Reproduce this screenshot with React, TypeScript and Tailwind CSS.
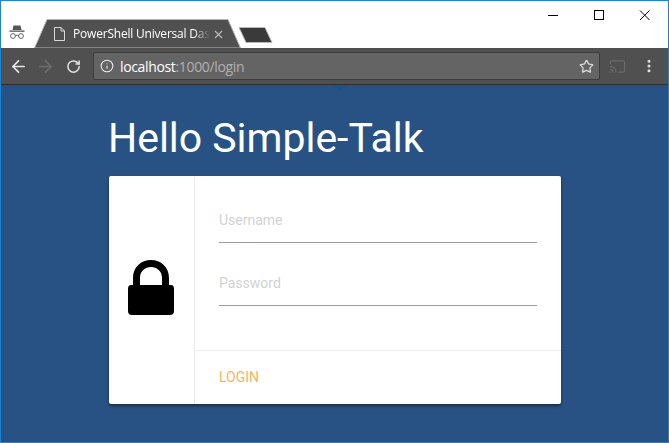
import React from "react";
import { ArrowLeft, ArrowRight, RotateCw, Star, Info, X, Cast, EllipsisVertical } from "lucide-react";

function IncognitoIcon() {
  return (
    <svg width="18" height="18" viewBox="0 0 18 18" className="text-[#555]">
      <path d="M5.5 2.5 L12.5 2.5 L13.5 7 L4.5 7 Z" fill="currentColor" />
      <rect x="1.5" y="7.5" width="15" height="1.3" fill="currentColor" />
      <circle cx="5" cy="13" r="2.4" fill="none" stroke="currentColor" strokeWidth="0.9" />
      <circle cx="13" cy="13" r="2.4" fill="none" stroke="currentColor" strokeWidth="0.9" />
      <path d="M7.4 12.6 Q9 11.8 10.6 12.6" fill="none" stroke="currentColor" strokeWidth="0.9" />
    </svg>
  );
}

function FileIcon() {
  return (
    <svg width="11" height="14" viewBox="0 0 11 14" fill="none" stroke="#d8d8d8" strokeWidth="1">
      <path d="M0.5 0.5 H7 L10.5 4 V13.5 H0.5 Z M7 0.5 V4 H10.5" />
    </svg>
  );
}

function LockIcon() {
  return (
    <svg width="46" height="56" viewBox="0 0 46 56">
      <path
        d="M5 25 V18 C5 7 13 0 23 0 C33 0 41 7 41 18 V25 H43 Q46 25 46 29 V51 Q46 55 42 55 H4 Q0 55 0 51 V29 Q0 25 3 25 Z M12 25 H34 V18 C34 11 29 7 23 7 C17 7 12 11 12 18 Z"
        fill="#000"
        fillRule="evenodd"
      />
    </svg>
  );
}

function Field({ label }: { label: string }) {
  return (
    <div className="h-[63px] flex flex-col justify-end">
      <div className="border-b border-[#9e9e9e] h-[33px] text-[14px] text-[#d2d2d2] leading-[20px]">{label}</div>
    </div>
  );
}

export default function App() {
  return (
    <div className="w-[669px] h-[443px] flex flex-col border border-[#1784d9] overflow-hidden bg-[#285283] font-['Roboto',sans-serif]">
      {/* tab strip */}
      <div className="relative h-[47px] shrink-0 bg-white">
        <svg width="290" height="47" viewBox="0 0 290 47" className="absolute left-0 top-0">
          <path d="M33.5 47 L46 18.5 H227 L239.5 47 Z" fill="#505050" stroke="#b4b4b4" strokeWidth="1" />
          <path d="M238 26.5 H264 L271 41.5 H245 Z" fill="#3a3a3a" stroke="#b8b8b8" strokeWidth="1" />
        </svg>
        <div className="absolute left-[7px] top-[22px]">
          <IncognitoIcon />
        </div>
        <div className="absolute left-[53px] top-[26px]">
          <FileIcon />
        </div>
        <div className="absolute left-[72px] top-[24px] whitespace-nowrap text-[12px] leading-[18px] tracking-[-0.2px] text-white font-['Open_Sans',sans-serif] [mask-image:linear-gradient(to_right,black_88%,transparent)]">
          PowerShell Universal Das
        </div>
        <X className="absolute left-[211px] top-[27px] text-[#bdbdbd]" size={13} strokeWidth={2} />
        <div className="absolute right-[-19px] top-[3px] flex items-center text-black">
          <svg width="150" height="24" viewBox="0 0 150 24" fill="none" stroke="#000" strokeWidth="1">
            <path d="M11 11.5 H21" />
            <rect x="57.5" y="6.5" width="9" height="9" />
            <path d="M103 6.5 L112.5 16 M112.5 6.5 L103 16" />
          </svg>
        </div>
      </div>

      {/* toolbar */}
      <div className="h-[37px] shrink-0 flex items-center bg-[#505050] border-b border-[#2f2f2f]">
        <ArrowLeft className="ml-[8px] text-[#e6e6e6]" size={19} strokeWidth={2.2} />
        <ArrowRight className="ml-[8px] text-[#6c6c6c]" size={19} strokeWidth={2.2} />
        <RotateCw className="ml-[11px] text-[#e0e0e0]" size={15} strokeWidth={2.4} />
        <div className="ml-[12px] w-[507px] h-[28px] flex items-center rounded-[2px] bg-[#646464] border border-[#3c3c3c]">
          <Info className="ml-[6px] text-[#eeeeee]" size={14} strokeWidth={1.8} />
          <span className="ml-[6px] text-[14px] text-white font-['Open_Sans',sans-serif] tracking-[-0.35px]">
            localhost<span className="text-[#b0b0b0]">:1000/login</span>
          </span>
          <Star className="ml-auto mr-[5px] text-[#dcdcdc]" size={15} strokeWidth={2} />
        </div>
        <Cast className="ml-[9px] text-[#6a6a6a]" size={17} strokeWidth={1.6} />
        <EllipsisVertical className="ml-[15px] text-[#e0e0e0]" size={16} strokeWidth={2.6} />
      </div>

      {/* page */}
      <div className="relative flex-1 pl-[108px] pt-[28px]">
        <svg width="14" height="5" viewBox="0 0 14 5" className="absolute left-[332px] top-0">
          <path d="M0 0 H14 L7 5 Z" fill="#17548f" />
        </svg>
        <h1 className="-ml-[1px] text-[41px] leading-[50px] text-white font-normal tracking-[-0.03px]">Hello Simple-Talk</h1>
        <div className="mt-[13px] w-[452px] h-[228px] flex bg-white rounded-[2px] shadow-[0_2px_3px_rgba(0,0,0,0.45)]">
          <div className="w-[86px] shrink-0 border-r border-[#e8e8e8] flex items-center justify-center pb-[4px] pr-[1px]">
            <LockIcon />
          </div>
          <div className="flex-1 flex flex-col">
            <div className="h-[174px] px-[24px] pt-[4px]">
              <Field label="Username" />
              <Field label="Password" />
            </div>
            <div className="flex-1 border-t border-[#eeeeee] px-[24px] flex items-center">
              <span className="text-[14px] text-[#f9b45c]">LOGIN</span>
            </div>
          </div>
        </div>
      </div>
    </div>
  );
}
